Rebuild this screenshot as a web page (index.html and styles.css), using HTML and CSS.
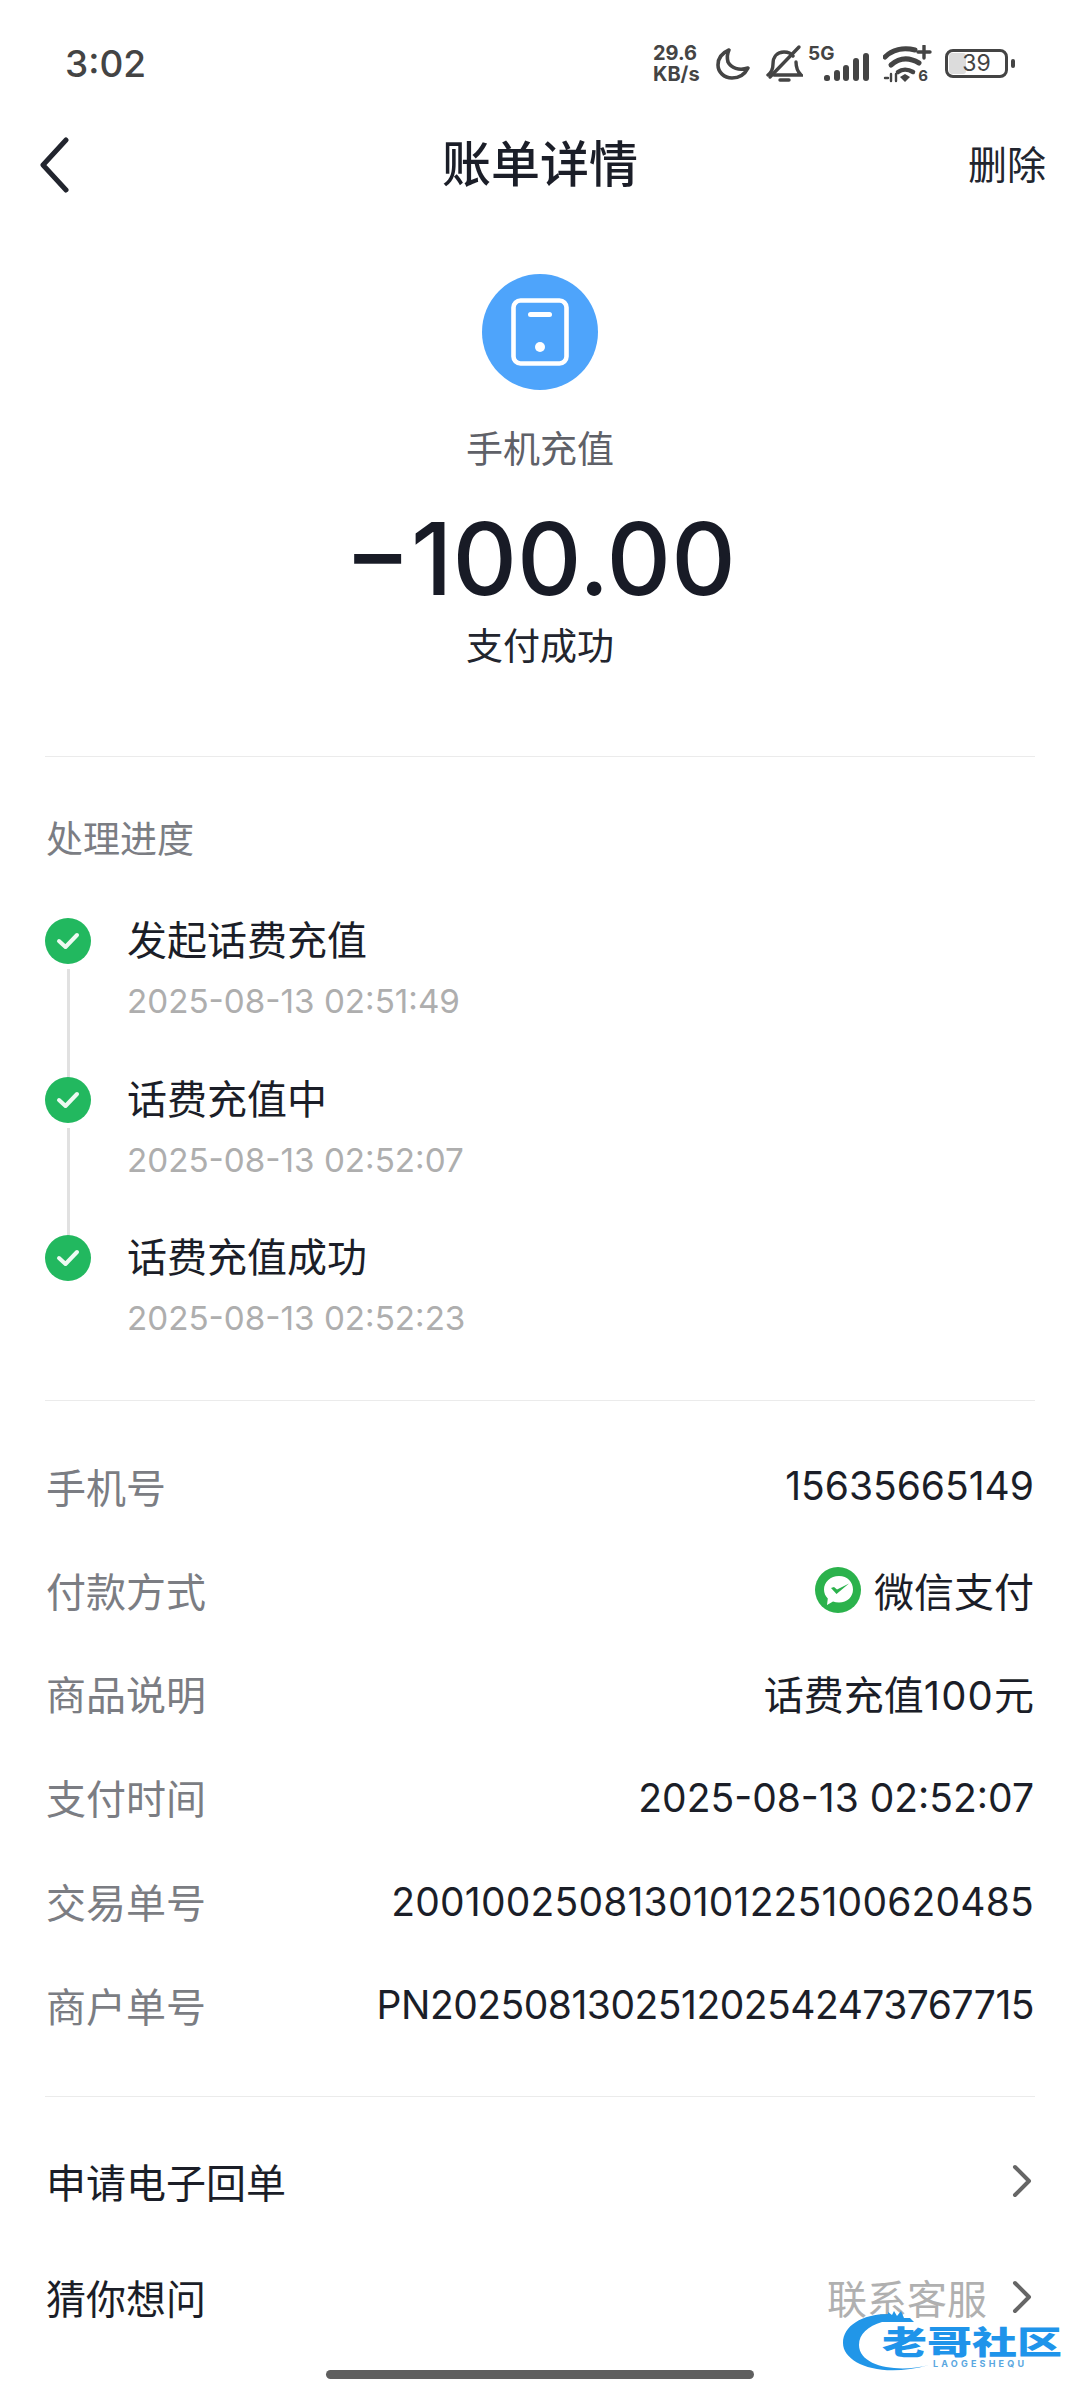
FILE: index.html
```html
<!DOCTYPE html>
<html lang="zh">
<head>
<meta charset="utf-8">
<title>账单详情</title>
<link rel="stylesheet" href="styles.css">
</head>
<body>
<div class="page">
  <header class="status">
    <span class="clock">3:02</span>
    <div class="status-icons">
      <div class="speed"><span>29.6</span><span>KB/s</span></div>
      <svg class="i-moon" width="36" height="34" viewBox="0 0 36 34"><path d="M14 3C7 6 3 11 3 18c0 7 6 13 14 13 7 0 13-4 16-10-9 3-17 0-20-6-1-4-1-8 1-12z" fill="none" stroke="#444" stroke-width="3.600" stroke-linejoin="round"/></svg>
      <svg class="i-bell" width="38" height="40" viewBox="0 0 38 40"><path d="M3 31c4-3 5-6 5-11 0-7 4-12 11-12 4 0 7 1 9 4M31 18c0 5 1 9 5 13H9M15 36h9" fill="none" stroke="#444" stroke-width="3.400" stroke-linecap="round"/><path d="M5 33L34 3" stroke="#444" stroke-width="3.400" stroke-linecap="round"/></svg>
      <div class="cell">
        <span class="five-g">5G</span>
        <svg width="46" height="30" viewBox="0 0 46 30"><g fill="#444"><rect x="0" y="23" width="6" height="6" rx="2.500"/><rect x="10" y="18" width="6" height="11" rx="3"/><rect x="19" y="13" width="6" height="16" rx="3"/><rect x="29" y="6" width="6" height="23" rx="3"/><rect x="39" y="1" width="6" height="28" rx="3"/></g></svg>
      </div>
      <div class="wifi">
        <svg width="50" height="38" viewBox="0 0 50 38"><g fill="none" stroke="#444" stroke-linecap="round"><path d="M2 12C9 5 20 2 32 5" stroke-width="5"/><path d="M8 20c8-7 18-8 28-2" stroke-width="5"/><path d="M15 27c4-3 10-3 15 0" stroke-width="4.500"/><path d="M41 1v12M35 7h12" stroke-width="3.400"/><path d="M2 33h3M8 29v7M13 29v7" stroke-width="2.400"/></g><path d="M17 32l5-3 5 3-5 5z" fill="#444"/></svg>
        <span class="wifi-six">6</span>
      </div>
      <div class="battery"><div class="battery-body"><span class="battery-fill"></span><span class="battery-num">39</span></div><span class="battery-nub"></span></div>
    </div>
  </header>

  <nav class="nav">
    <svg class="back" width="36" height="56" viewBox="0 0 36 56"><path d="M31 3L8 28l23 25" fill="none" stroke="#22252e" stroke-width="5" stroke-linecap="round" stroke-linejoin="round"/></svg>
    <h1 class="nav-title">账单详情</h1>
    <span class="nav-action">删除</span>
  </nav>

  <section class="summary">
    <div class="type-icon">
      <svg width="58" height="68" viewBox="0 0 58 68"><rect x="2.500" y="2.500" width="53" height="63" rx="7" fill="none" stroke="#fff" stroke-width="4.600"/><rect x="17" y="14" width="24" height="5" rx="2.500" fill="#fff"/><circle cx="29" cy="49" r="5" fill="#fff"/></svg>
    </div>
    <div class="type-name">手机充值</div>
    <div class="amount">−100.00</div>
    <div class="pay-state">支付成功</div>
  </section>

  <section class="progress">
    <h2 class="progress-title">处理进度</h2>
    <ol class="steps">
      <li class="step">
        <span class="dot"><svg width="24" height="20" viewBox="0 0 24 20"><path d="M3 10l6.500 6L21 4" fill="none" stroke="#fff" stroke-width="4" stroke-linecap="round" stroke-linejoin="round" opacity=".92"/></svg></span>
        <div class="step-body"><div class="step-title">发起话费充值</div><div class="step-time">2025-08-13 02:51:49</div></div>
      </li>
      <li class="step">
        <span class="dot"><svg width="24" height="20" viewBox="0 0 24 20"><path d="M3 10l6.500 6L21 4" fill="none" stroke="#fff" stroke-width="4" stroke-linecap="round" stroke-linejoin="round" opacity=".92"/></svg></span>
        <div class="step-body"><div class="step-title">话费充值中</div><div class="step-time">2025-08-13 02:52:07</div></div>
      </li>
      <li class="step">
        <span class="dot"><svg width="24" height="20" viewBox="0 0 24 20"><path d="M3 10l6.500 6L21 4" fill="none" stroke="#fff" stroke-width="4" stroke-linecap="round" stroke-linejoin="round" opacity=".92"/></svg></span>
        <div class="step-body"><div class="step-title">话费充值成功</div><div class="step-time">2025-08-13 02:52:23</div></div>
      </li>
    </ol>
  </section>

  <section class="details">
    <div class="row"><span class="label">手机号</span><span class="value num">15635665149</span></div>
    <div class="row"><span class="label">付款方式</span><span class="value pay">
      <svg width="46" height="46" viewBox="0 0 46 46"><circle cx="23" cy="23" r="23" fill="#2bb24c"/><path d="M24 9c-8.500 0-15 6-15 13.500 0 3.500 1.400 6.600 3.800 9L12 38l6-3.400c1.800.6 3.800.9 6 .9 8.500 0 14-5.800 14-13S32.500 9 24 9z" fill="#fff"/><path d="M16 21l5.500 6L34 16.500 22 22.500 19 20z" fill="#2bb24c"/></svg>
      微信支付</span></div>
    <div class="row"><span class="label">商品说明</span><span class="value">话费充值<span class="num-wide">100</span>元</span></div>
    <div class="row"><span class="label">支付时间</span><span class="value num">2025-08-13 02:52:07</span></div>
    <div class="row"><span class="label">交易单号</span><span class="value num num-loose">2001002508130101225100620485</span></div>
    <div class="row"><span class="label">商户单号</span><span class="value num num-tight">PN202508130251202542473767715</span></div>
  </section>

  <section class="links">
    <div class="link"><span class="link-title">申请电子回单</span>
      <svg class="chev" width="20" height="34" viewBox="0 0 20 34"><path d="M3 3l14 14L3 31" fill="none" stroke="#666" stroke-width="4" stroke-linecap="round" stroke-linejoin="round"/></svg></div>
    <div class="link"><span class="link-title">猜你想问</span><span class="link-side">联系客服</span>
      <svg class="chev" width="20" height="34" viewBox="0 0 20 34"><path d="M3 3l14 14L3 31" fill="none" stroke="#666" stroke-width="4" stroke-linecap="round" stroke-linejoin="round"/></svg></div>
  </section>

  <div class="home-bar"></div>

  <div class="watermark">
    <svg width="100" height="70" viewBox="0 0 100 70"><path d="M46 8C20 8 1 20 1 37c0 20 36 36 86 22-30 8-70 2-70-20C17 28 26 20 40 16l32 0 -4-4-6 0-3-7-4 5-3-5-2 4-4-3z" fill="#2196e8"/></svg>
    <span class="wm-name">老哥社区</span>
    <span class="wm-sub">LAOGESHEQU</span>
  </div>
</div>
</body>
</html>
```
FILE: styles.css
```css
* { box-sizing: border-box; }
html, body { margin: 0; padding: 0; background: #fff; }
body {
  width: 1080px;
  height: 2400px;
  overflow: hidden;
  font-family: "Inter", "Noto Sans CJK SC", sans-serif;
  color: #1b1e28;
}
.page { position: relative; width: 1080px; height: 2400px; display: flex; flex-direction: column; }

.status { height: 127px; padding: 0 65px; display: flex; align-items: center; justify-content: space-between; }
.clock { font-size: 37px; color: #444; font-weight: 500; line-height: 1; }
.status-icons { width: 362px; display: flex; align-items: center; height: 44px; }
.speed { display: flex; flex-direction: column; font-size: 20px; line-height: 21px; font-weight: 700; color: #444; width: 51px; flex: none; }
.i-moon, .i-bell { flex: none; }
.i-moon { margin-left: 11px; }
.i-bell { margin-left: 14px; }
.cell { position: relative; width: 62px; height: 36px; flex: none; display: flex; align-items: flex-end; justify-content: flex-end; margin-left: 5px; }
.five-g { position: absolute; left: 0; top: -3px; font-size: 19px; line-height: 22px; font-weight: 700; color: #444; }
.wifi { position: relative; width: 50px; height: 38px; flex: none; margin-left: 13px; }
.wifi svg { display: block; }
.wifi-six { position: absolute; right: 5px; bottom: -2px; font-size: 15px; line-height: 18px; font-weight: 700; color: #444; }
.battery { display: flex; align-items: center; gap: 3px; flex: none; margin-left: 12px; }
.battery-body { position: relative; width: 63px; height: 29px; border: 3px solid #444; border-radius: 8px; display: flex; align-items: center; justify-content: center; }
.battery-fill { position: absolute; left: 1px; top: 1px; bottom: 1px; width: 17px; background: #dcdcdc; border-radius: 3px; }
.battery-num { position: relative; font-size: 23px; line-height: 1; color: #444; }
.battery-nub { width: 4px; height: 9px; background: #444; border-radius: 2px; }

.nav { position: relative; height: 76px; display: flex; align-items: center; justify-content: space-between; padding: 0 34px 0 35px; }
.back { flex: none; }
.nav-title { position: absolute; left: 0; right: 0; top: 0; margin: 0; text-align: center; font-size: 49px; line-height: 76px; font-weight: 500; color: #1b1e28; }
.nav-action { font-size: 39px; line-height: 76px; color: #22252e; }

.summary { height: 554px; padding-top: 71px; display: flex; flex-direction: column; align-items: center; border-bottom: 1px solid #ebebeb; margin: 0 45px; }
.type-icon { width: 116px; height: 116px; border-radius: 50%; background: #4ea4fb; display: flex; align-items: center; justify-content: center; flex: none; }
.type-name { margin-top: 33px; font-size: 37px; line-height: 54px; color: #5f6168; }
.amount { margin-top: 20px; font-size: 100px; line-height: 124px; font-weight: 500; color: #181b26; }
.pay-state { margin-top: -1px; font-size: 37px; line-height: 54px; color: #22252e; }

.progress { height: 644px; margin: 0 45px; border-bottom: 1px solid #ebebeb; padding-top: 58px; }
.progress-title { margin: 0; padding-left: 1px; font-size: 37px; line-height: 50px; font-weight: 400; color: #7b7d83; }
.steps { list-style: none; margin: 53px 0 0; padding: 0; }
.step { position: relative; height: 158.500px; display: flex; gap: 36px; }
.step:not(:last-child)::before { content: ""; position: absolute; left: 22px; top: 51px; bottom: -6px; width: 3px; background: #e1e1e1; }
.dot { width: 46px; height: 46px; border-radius: 50%; background: #22b85f; display: flex; align-items: center; justify-content: center; flex: none; }
.step-body { margin-top: -7px; }
.step-title { font-size: 40px; line-height: 60px; color: #1b1e28; }
.step-time { margin-top: 6px; font-size: 33.200px; line-height: 48px; color: #aeaeae; }

.details { height: 696px; margin: 0 45px; border-bottom: 1px solid #ebebeb; padding-top: 33px; }
.row { height: 103.800px; display: flex; align-items: center; justify-content: space-between; font-size: 40px; padding: 0 1px; }
.label { color: #7b7d83; }
.value { color: #1b1e28; }
.num { font-size: 39px; }
.num-wide { letter-spacing: 1.200px; }
.num-loose { letter-spacing: .2px; }
.num-tight { letter-spacing: -.5px; }
.pay { display: flex; align-items: center; gap: 13px; }

.links { margin: 0 45px; padding-top: 26px; }
.link { height: 116px; display: flex; align-items: center; font-size: 40px; padding-right: 3px; padding-left: 1px; }
.link-title { color: #1b1e28; flex: 1; }
.link-side { color: #b0b0b0; margin-right: 25px; }
.chev { flex: none; }

.home-bar { position: absolute; left: 326px; bottom: 21px; width: 428px; height: 9px; border-radius: 5px; background: #5f5f5f; }

.watermark { position: absolute; left: 842px; top: 2306px; width: 226px; height: 70px; }
.watermark svg { position: absolute; left: 0; top: 0; }
.wm-name { position: absolute; left: 40px; top: 21px; font-size: 45px; line-height: 30px; font-weight: 900; color: #1f94ea; white-space: nowrap; transform: scaleY(.72); transform-origin: left center; }
.wm-sub { position: absolute; left: 91px; top: 52px; font-size: 9px; line-height: 12px; font-weight: 700; color: #5aa7e0; letter-spacing: 3.200px; }
```
